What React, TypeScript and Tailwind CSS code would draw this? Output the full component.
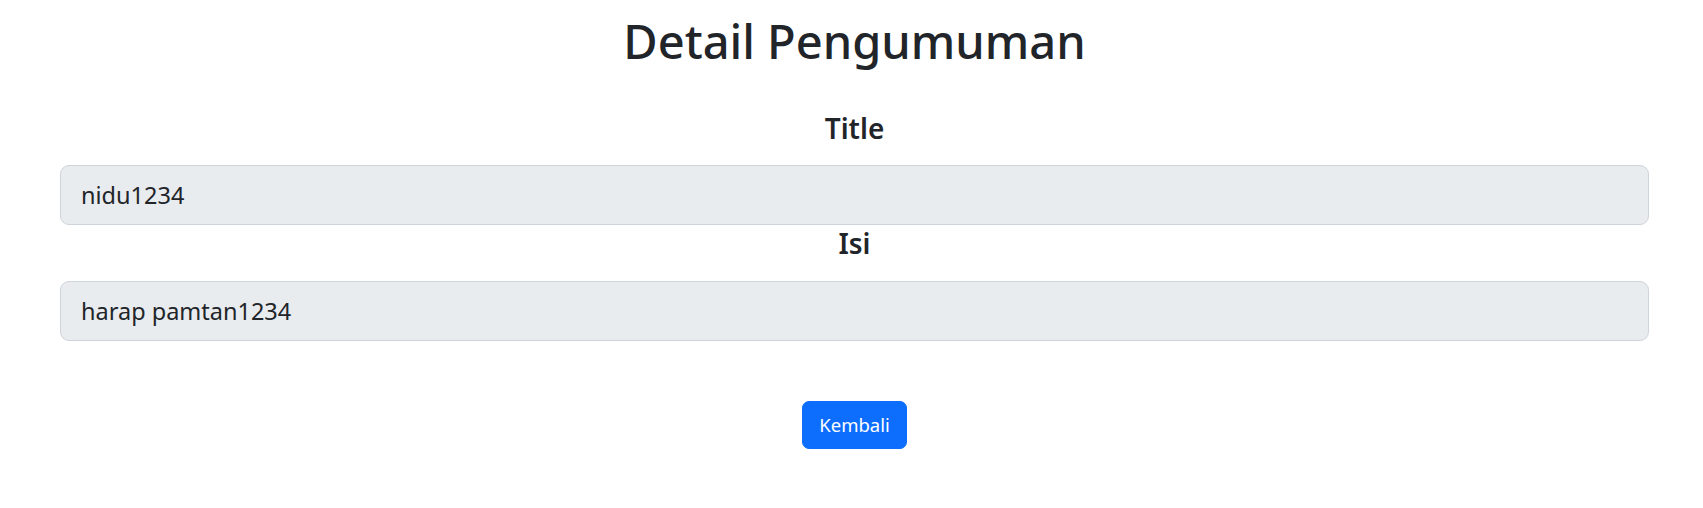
import React from "react";

export default function App() {
  return (
    <div
      className="min-h-[508px] w-full bg-white pl-[60px] pr-[54px] pt-[11px] text-[#212529]"
      style={{ fontFamily: '"Noto Sans", "Open Sans", "Liberation Sans", sans-serif' }}
    >
      <h1 className="text-center text-[47px] font-medium leading-[60px]">Detail Pengumuman</h1>
      <div className="mt-[39px] flex flex-col">
        <h4 className="text-center text-[28px] font-semibold leading-[36px]">Title</h4>
        <input
          readOnly
          defaultValue="nidu1234"
          className="mt-[19px] block h-[60px] w-full rounded-[9px] border border-[#ced4da] bg-[#e9ecef] px-[20px] text-[23.5px] leading-[37.5px] text-[#212529] outline-none"
        />
        <h4 className="text-center text-[28px] font-semibold leading-[36px]">Isi</h4>
        <input
          readOnly
          defaultValue="harap pamtan1234"
          className="mt-[20px] block h-[60px] w-full rounded-[9px] border border-[#ced4da] bg-[#e9ecef] px-[20px] text-[23.5px] leading-[37.5px] text-[#212529] outline-none"
        />
        <div className="mt-[60px] flex justify-center">
          <button className="h-[48px] rounded-[7px] border border-[#0d6efd] bg-[#0d6efd] px-[16px] text-[18.5px] leading-[30px] text-white">
            Kembali
          </button>
        </div>
      </div>
    </div>
  );
}
